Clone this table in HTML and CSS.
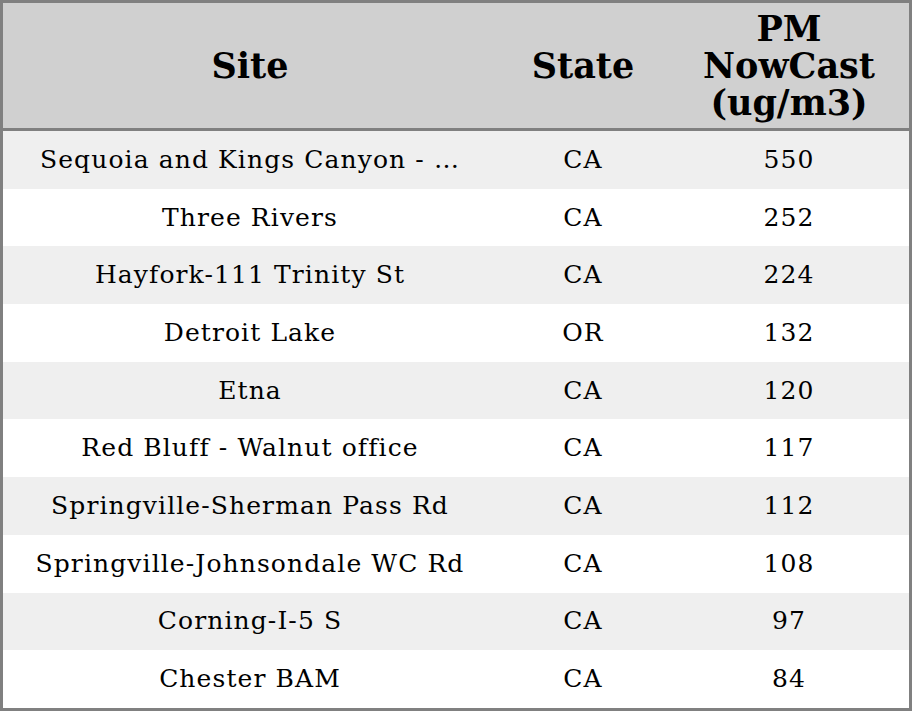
FILE: index.html
```html
<!DOCTYPE html>
<html>
<head>
<meta charset="utf-8">
<link rel="stylesheet" href="styles.css">
</head>
<body>
<table class="aq">
  <colgroup>
    <col class="c-site">
    <col class="c-state">
    <col class="c-pm">
  </colgroup>
  <thead>
    <tr><th>Site</th><th>State</th><th>PM<br>NowCast<br>(ug/m3)</th></tr>
  </thead>
  <tbody>
    <tr><td>Sequoia and Kings Canyon - …</td><td>CA</td><td>550</td></tr>
    <tr><td>Three Rivers</td><td>CA</td><td>252</td></tr>
    <tr><td>Hayfork-111 Trinity St</td><td>CA</td><td>224</td></tr>
    <tr><td>Detroit Lake</td><td>OR</td><td>132</td></tr>
    <tr><td>Etna</td><td>CA</td><td>120</td></tr>
    <tr><td>Red Bluff - Walnut office</td><td>CA</td><td>117</td></tr>
    <tr><td>Springville-Sherman Pass Rd</td><td>CA</td><td>112</td></tr>
    <tr><td>Springville-Johnsondale WC Rd</td><td>CA</td><td>108</td></tr>
    <tr><td>Corning-I-5 S</td><td>CA</td><td>97</td></tr>
    <tr><td>Chester BAM</td><td>CA</td><td>84</td></tr>
  </tbody>
</table>
</body>
</html>
```
FILE: styles.css
```css
html, body {
  margin: 0;
  padding: 0;
  background: #ffffff;
}
.aq {
  width: 912px;
  border-collapse: separate;
  border-spacing: 0;
  table-layout: fixed;
  border: 3px solid #808080;
  font-family: "DejaVu Serif", serif;
  color: #000;
}
.c-site { width: 494px; }
.c-state { width: 172px; }
.c-pm { width: 240px; }
.aq th {
  background: #d0d0d0;
  font-size: 35px;
  font-weight: bold;
  line-height: 37px;
  height: 128px;
  padding: 0;
  box-sizing: border-box;
  text-align: center;
  vertical-align: middle;
  border-bottom: 3px solid #808080;
}
.aq td {
  font-size: 25px;
  letter-spacing: 1.1px;
  line-height: 28px;
  height: 57.7px;
  padding: 0;
  text-align: center;
  vertical-align: middle;
  white-space: nowrap;
  overflow: hidden;
}
.aq tbody tr:nth-child(odd) td { background: #efefef; }
.aq tbody tr:nth-child(even) td { background: #ffffff; }
```
